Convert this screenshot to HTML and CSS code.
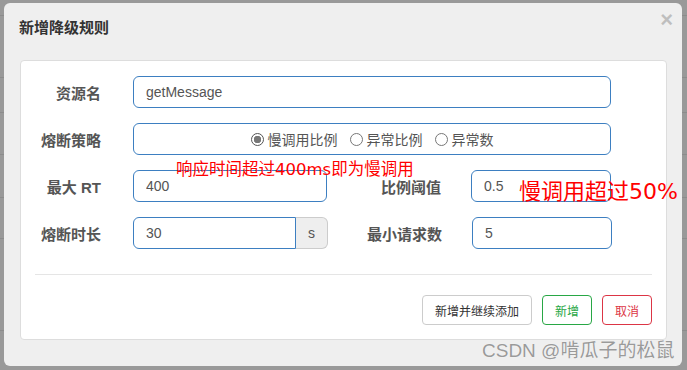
FILE: index.html
```html
<!DOCTYPE html>
<html lang="zh-CN">
<head>
  <meta charset="UTF-8" />
  <meta name="viewport" content="width=device-width, initial-scale=1.0"/>
  <title>新增降级规则</title>
  <link rel="stylesheet" href="styles.css">
</head>
<body>
<div class="modal">
  <button class="close" type="button">&times;</button>
  <div class="modal-header">
    <h4 class="modal-title">新增降级规则</h4>
  </div>

  <div class="panel">
    <form class="rule-form">
      <div class="row">
        <label class="label">资源名</label>
        <input type="text" class="field field-wide" value="getMessage">
      </div>

      <div class="row">
        <label class="label">熔断策略</label>
        <div class="field field-wide radios">
          <label class="radio"><input type="radio" name="grade" checked>慢调用比例</label>
          <label class="radio"><input type="radio" name="grade">异常比例</label>
          <label class="radio"><input type="radio" name="grade">异常数</label>
        </div>
      </div>

      <div class="row">
        <label class="label">最大 RT</label>
        <input type="text" class="field field-half" value="400">
        <label class="label label-second">比例阈值</label>
        <input type="text" class="field field-small" value="0.5">
      </div>

      <div class="row">
        <label class="label">熔断时长</label>
        <div class="input-group">
          <input type="text" class="field" value="30">
          <span class="addon">s</span>
        </div>
        <label class="label label-second">最小请求数</label>
        <input type="text" class="field field-small" value="5">
      </div>
    </form>

    <hr class="divider">

    <div class="footer">
      <button type="button" class="btn">新增并继续添加</button>
      <button type="button" class="btn btn-green">新增</button>
      <button type="button" class="btn btn-red">取消</button>
    </div>
  </div>
</div>

<div class="note note-rt">响应时间超过400ms即为慢调用</div>
<div class="note note-ratio">慢调用超过50%</div>
<div class="watermark">CSDN @啃瓜子的松鼠</div>
</body>
</html>
```

FILE: styles.css
```css
body {
  margin: 0;
  width: 687px;
  height: 370px;
  overflow: hidden;
  padding: 3px 0 0 4px;
  box-sizing: border-box;
  position: relative;
  font-family: "Liberation Sans", "Noto Sans CJK SC", sans-serif;
  background-color: #999;
  background-image:
    linear-gradient(#8c8c8c, #8c8c8c),
    linear-gradient(#8c8c8c, #8c8c8c),
    linear-gradient(#8c8c8c, #8c8c8c),
    linear-gradient(#8c8c8c, #8c8c8c),
    linear-gradient(#8c8c8c, #8c8c8c),
    linear-gradient(#8c8c8c, #8c8c8c),
    linear-gradient(#8c8c8c, #8c8c8c);
  background-repeat: no-repeat;
  background-size: 100% 1px;
  background-position: 0 15px, 0 77px, 0 112px, 0 154px, 0 197px, 0 238px, 0 330px;
}

.modal {
  position: relative;
  width: 678px;
  height: 363px;
  background-color: #efefef;
  border-radius: 6px;
}

.close {
  position: absolute;
  top: 4px;
  right: 9px;
  padding: 0;
  border: none;
  background: transparent;
  font-family: "Liberation Sans", sans-serif;
  font-size: 22px;
  font-weight: bold;
  line-height: 26px;
  color: #000;
  opacity: 0.2;
  cursor: pointer;
}

.modal-header {
  padding: 14px 15px 21px;
}

.modal-title {
  margin: 0;
  font-size: 15px;
  line-height: 22px;
  font-weight: bold;
  color: #333;
}

.panel {
  margin: 0 15px 0 16px;
  height: 280px;
  box-sizing: border-box;
  background-color: white;
  border: 1px solid #ddd;
  border-radius: 4px;
}

.rule-form {
  padding-top: 15px;
  display: flex;
  flex-direction: column;
  gap: 15px;
}

.row {
  display: flex;
  align-items: center;
  height: 32px;
}

.label {
  width: 80px;
  margin-right: 32px;
  text-align: right;
  font-size: 15px;
  font-weight: bold;
  color: #555;
}

.label-second {
  width: 114px;
  margin-right: 30px;
}

.field {
  height: 32px;
  box-sizing: border-box;
  padding: 0 12px;
  border: 1px solid #3d7fc1;
  border-radius: 6px;
  font-family: inherit;
  font-size: 14px;
  color: #555;
  outline: none;
}

.field-wide {
  width: 478px;
}

.field-half {
  width: 194px;
}

.field-small {
  width: 140px;
}

.radios {
  display: flex;
  align-items: center;
  justify-content: center;
  gap: 12px;
}

.radio {
  display: flex;
  align-items: center;
  gap: 4px;
  font-size: 14px;
  color: #555;
}

.radio input {
  appearance: none;
  margin: 0;
  width: 13px;
  height: 13px;
  border: 1px solid #777;
  border-radius: 50%;
  background: #fff;
}

.radio input:checked {
  background: radial-gradient(circle, #777 0 3.5px, #fff 4px);
  border-color: #555;
}

.input-group {
  display: flex;
  width: 195px;
}

.input-group .field {
  width: 163px;
  border-radius: 6px 0 0 6px;
}

.addon {
  width: 32px;
  height: 32px;
  box-sizing: border-box;
  display: flex;
  align-items: center;
  justify-content: center;
  background-color: #eee;
  border: 1px solid #ccc;
  border-left: none;
  border-radius: 0 6px 6px 0;
  font-size: 14px;
  color: #555;
}

.divider {
  margin: 25px 14px 0;
  border: none;
  border-top: 1px solid #e5e5e5;
}

.footer {
  display: flex;
  justify-content: flex-end;
  gap: 10px;
  margin-top: 20px;
  padding-right: 14px;
}

.btn {
  height: 30px;
  padding: 0 12px;
  background: white;
  border: 1px solid #ccc;
  border-radius: 4px;
  font-family: inherit;
  font-size: 12px;
  color: #333;
  cursor: pointer;
}

.btn-green {
  width: 50px;
  border-color: #28a745;
  color: #28a745;
}

.btn-red {
  width: 50px;
  border-color: #dc3545;
  color: #dc3545;
}

.note {
  position: absolute;
  color: #ff0000;
  white-space: nowrap;
  font-family: "DejaVu Sans", "Noto Sans CJK SC", sans-serif;
}

.note-rt {
  left: 176px;
  top: 159px;
  font-size: 16.5px;
  line-height: 22px;
}

.note-ratio {
  left: 519px;
  top: 177px;
  font-size: 22px;
  line-height: 30px;
}

.watermark {
  position: absolute;
  left: 482px;
  top: 338px;
  font-size: 19px;
  line-height: 26px;
  color: #9a9a9a;
  text-shadow: 0 0 1px #fff;
  white-space: nowrap;
}
```
